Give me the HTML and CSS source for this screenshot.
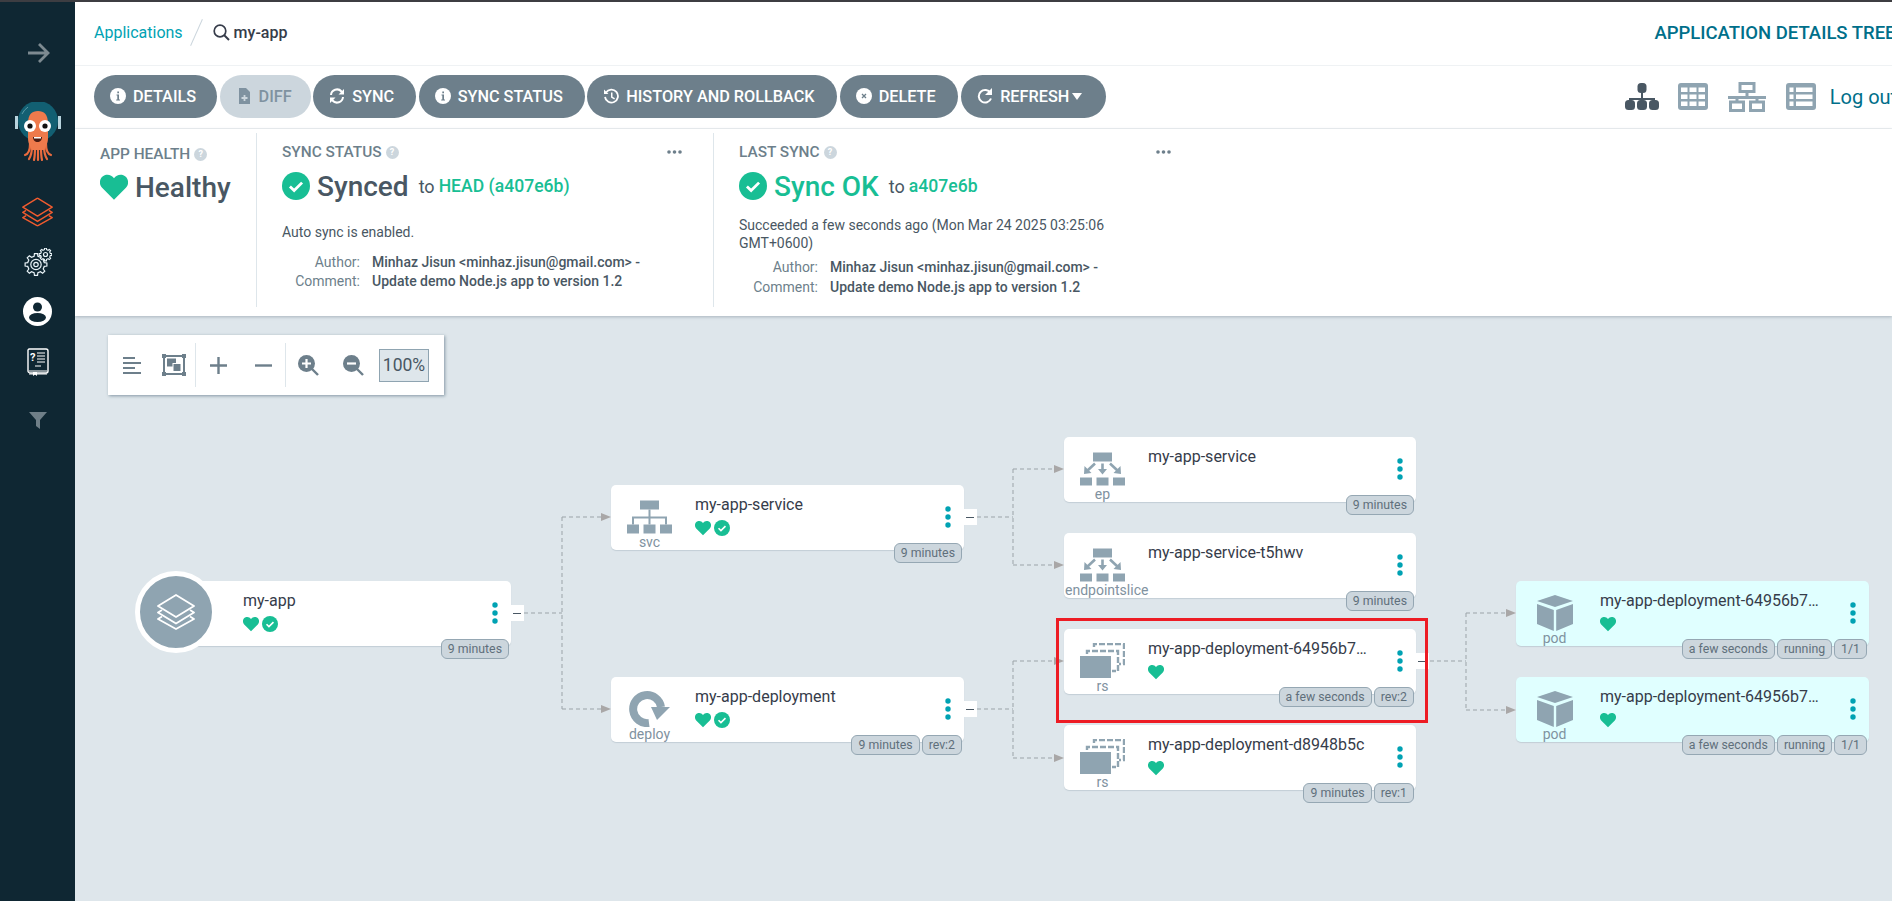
FILE: index.html
```html
<!DOCTYPE html>
<html lang="en">
<head>
<meta charset="utf-8">
<title>my-app - Argo CD</title>
<link rel="stylesheet" href="styles.css">
</head>
<body>
<svg class="defs" xmlns="http://www.w3.org/2000/svg">
  <symbol id="heart" viewBox="0 0 24 22"><path d="M12 22 1.800 11.600C-1.400 8.300-.4 2.500 4 .9c3.100-1.100 6.200 0 8 2.700C13.800.9 16.900-.2 20 .9c4.400 1.600 5.400 7.400 2.200 10.700Z"/></symbol>
  <symbol id="check" viewBox="0 0 24 24"><circle cx="12" cy="12" r="12"/><path d="M6.800 12.400l3.600 3.500 6.800-6.800" fill="none" stroke="#fff" stroke-width="2.400"/></symbol>
  <symbol id="info" viewBox="0 0 16 16"><circle cx="8" cy="8" r="8" fill="#fff"/><path d="M6.500 6.500H9V11.500H10V12.500H6.200V11.500H7.300V7.500H6.500ZM7.300 3.500H9V5.200H7.300Z" fill="#6d7f8b"/></symbol>
  <symbol id="svc" viewBox="0 0 45 33"><path d="M13 0h19v9H13ZM0 24h12v9H0ZM16.500 24h12v9h-12ZM33 24h12v9H33Z"/><path d="M22.500 9v15M6 24v-7h33v7" fill="none" stroke="currentColor" stroke-width="2"/></symbol>
  <symbol id="ep" viewBox="0 0 45 33"><path d="M13 0h19v9H13ZM0 25h12v8H0ZM16.500 25h12v8h-12ZM33 25h12v8H33Z"/><path d="M22.500 11v7M15 11 7 18.500M30 11l8 7.500" fill="none" stroke="currentColor" stroke-width="2.600"/><path d="M18 16.500h9l-4.500 5.500ZM4.500 13.500l-.5 8 7.500-1ZM40.500 13.500l.5 8-7.500-1Z"/></symbol>
  <symbol id="rs" viewBox="0 0 45 36"><rect y="13" width="31" height="22"/><path d="M7 11V8H38V28H32" fill="none" stroke="currentColor" stroke-width="2.400" stroke-dasharray="6 2"/><path d="M14 4V1H44V21H39" fill="none" stroke="currentColor" stroke-width="2.400" stroke-dasharray="6 2"/></symbol>
  <symbol id="deploy" viewBox="0 0 42 36"><path d="M20 32A14 14 0 1 1 32 16" fill="none" stroke="currentColor" stroke-width="8"/><path d="M22 16H41L28 29Z"/></symbol>
  <symbol id="pod" viewBox="0 0 36 36"><path d="M18 0 36 6 18 12 0 6ZM0 9 16.800 15V36L0 29ZM36 9 19.200 15V36L36 29Z"/></symbol>
  <symbol id="stack" viewBox="0 0 38 36"><g fill="none" stroke="currentColor" stroke-width="1.800" stroke-linejoin="round"><path d="M19 1 37 12 19 23 1 12Z"/><path d="M5 16 1 18.500 19 29.500 37 18.500 33 16"/><path d="M5 22.500 1 25 19 35 37 25 33 22.500"/></g></symbol>
  <path id="gear" d="M8.280-1.910 10.890-1.530V1.530L8.280 1.910 7.210 4.500 8.780 6.620 6.620 8.780 4.500 7.210 1.910 8.280 1.530 10.890H-1.530L-1.910 8.280-4.500 7.210-6.620 8.780-8.780 6.620-7.210 4.500-8.280 1.910-10.890 1.530V-1.530L-8.280-1.910-7.210-4.500-8.780-6.620-6.620-8.780-4.500-7.210-1.910-8.280-1.530-10.890H1.530L1.910-8.280 4.500-7.210 6.620-8.780 8.780-6.620 7.210-4.500Z"/>
</svg>
<div class="strip"></div>
<div class="app">
  <nav class="side">
    <svg class="s-arrow" viewBox="0 0 24 24"><path d="M2 12h20M13 3l9 9-9 9" fill="none" stroke="#7d8a91" stroke-width="2.800"/></svg>
    <svg class="s-logo" viewBox="0 0 50 60">
      <circle cx="25" cy="19" r="20" fill="#125f72"/>
      <rect x="2" y="14" width="3" height="13" fill="#b8d3dd"/><rect x="45" y="14" width="3" height="13" fill="#b8d3dd"/>
      <path d="M9 12a18 18 0 0 1 6-7" fill="none" stroke="#5b9aa8" stroke-width="1"/>
      <g fill="none" stroke="#ea6b3e" stroke-width="2.200" stroke-linecap="round"><path d="M17 42c0 6-2 10-5 11M19 44c0 6-1 10-3 13M22 44c0 6 0 10-1 14M25 44v14M28 44c0 6 0 10 1 14M31 44c0 6 1 10 3 13M33 42c0 6 2 10 5 11"/></g>
      <path d="M15 22C15 12 19 9 25 9s10 3 10 13v14c0 6-3 10-4 12H19c-1-2-4-6-4-12Z" fill="#ef7a4c"/>
      <circle cx="17" cy="24" r="6" fill="#fff"/><circle cx="32" cy="24" r="6" fill="#fff"/>
      <circle cx="17" cy="24" r="2.600" fill="#111"/><circle cx="32" cy="24" r="2.600" fill="#111"/>
      <path d="M20 35h9c0 3-2 5-4.500 5S20 38 20 35Z" fill="#4a1b12"/><path d="M21 35h7v1.500h-7Z" fill="#fff"/>
    </svg>
    <svg class="s-stack" viewBox="0 0 38 36"><use href="#stack"/></svg>
    <svg class="s-gear" viewBox="0 0 28 28"><g fill="#0f2733" stroke="#e9f3f8" stroke-width="1.200"><use href="#gear" transform="translate(12 16.500)"/><circle cx="12" cy="16.500" r="5.200"/><circle cx="12" cy="16.500" r="2.200"/><use href="#gear" transform="translate(21.500 6.500) scale(.58)" stroke-width="2"/><circle cx="21.500" cy="6.500" r="2"/></g></svg>
    <svg class="s-user" viewBox="0 0 29 29"><circle cx="14.500" cy="14.500" r="14.500" fill="#fff"/><circle cx="14.500" cy="10" r="4.500" fill="#0f2733"/><ellipse cx="14.500" cy="20.500" rx="8.500" ry="4.500" fill="#0f2733"/></svg>
    <svg class="s-book" viewBox="0 0 22 28"><path d="M2 1h17c1 0 2 1 2 2v20c0 1-1 2-2 2H3c-1 0-2-1-2-2V2Z" fill="#0f2733" stroke="#fff" stroke-width="1.400"/><path d="M2 23h18M2 26h18" stroke="#fff" stroke-width="1.200"/><path d="M6 24h4v4L8 26.500 6 28Z" fill="#fff"/><text x="3" y="13" class="s-book-q">?</text><path d="M10 5h8M10 8h8M10 11h8M10 14h8M8 18h6" stroke="#fff" stroke-width="1.200"/></svg>
    <svg class="s-filter" viewBox="0 0 18 17"><path d="M0 0h18L11 8v9L7 14V8Z" fill="#6f7f88"/></svg>
  </nav>
  <main class="main">
    <header class="top">
      <a class="crumb">Applications</a>
      <span class="slash"></span>
      <svg class="search" viewBox="0 0 17 17"><circle cx="7" cy="7" r="5.800" fill="none" stroke="#363c4a" stroke-width="1.700"/><path d="M11 11l5 5" stroke="#363c4a" stroke-width="1.900"/></svg>
      <span class="crumb-app">my-app</span>
      <span class="page-title">APPLICATION DETAILS TREE</span>
    </header>
    <div class="actions">
      <button class="btn"><svg class="ic"><use href="#info"/></svg>DETAILS</button>
      <button class="btn off"><svg class="ic" viewBox="0 0 16 16"><path d="M3 0h7l4 4v12H3Z" fill="#7f92a0"/><path d="M8.500 7v6M5.500 10h6" stroke="#ccd6dd" stroke-width="1.800"/></svg>DIFF</button>
      <button class="btn b-sync"><svg class="ic" viewBox="0 0 16 16"><g fill="none" stroke="#fff" stroke-width="2"><path d="M2 7a6 6 0 0 1 10.500-3.500L14 5"/><path d="M14 9a6 6 0 0 1-10.500 3.500L2 11"/></g><path d="M15 1v5.500H9.500ZM1 15V9.500h5.500Z" fill="#fff"/></svg>SYNC</button>
      <button class="btn b-status"><svg class="ic"><use href="#info"/></svg>SYNC STATUS</button>
      <button class="btn b-hist"><svg class="ic" viewBox="0 0 16 16"><path d="M3 4.500A6.500 6.500 0 1 1 2 9" fill="none" stroke="#fff" stroke-width="1.800"/><path d="M1 1.500 5.500 6H1ZM8 4.500h1.500v4.300l2.500 1.500-.8 1.200L8 9.500Z" fill="#fff"/></svg>HISTORY AND ROLLBACK</button>
      <button class="btn b-del"><svg class="ic" viewBox="0 0 16 16"><circle cx="8" cy="8" r="8" fill="#fff"/><path d="M6 6l4 4M10 6l-4 4" stroke="#6d7f8b" stroke-width="1.300"/></svg>DELETE</button>
      <button class="btn b-ref"><svg class="ic" viewBox="0 0 16 16"><path d="M13.500 5A6.300 6.300 0 1 0 14 10.500" fill="none" stroke="#fff" stroke-width="2"/><path d="M15 0v7H8Z" fill="#fff"/></svg>REFRESH<i class="caret"></i></button>
      <div class="views">
        <svg class="v-tree" viewBox="0 0 34 27"><path d="M17 8v8M5 21v-5h24v5M17 16v5" fill="none" stroke="#495763" stroke-width="2"/><rect x="12.500" width="9" height="10" rx="3.500" fill="#495763"/><rect y="17" width="10" height="10" rx="3.500" fill="#495763"/><rect x="12" y="17" width="10" height="10" rx="3.500" fill="#495763"/><rect x="24" y="17" width="10" height="10" rx="3.500" fill="#495763"/></svg>
        <svg class="v-grid" viewBox="0 0 30 27"><rect width="30" height="27" rx="3" fill="#8fa4b1"/><path d="M3 4.500h6.500v4.500H3ZM11.500 4.500H18.500v4.500H11.500ZM20.500 4.500H27v4.500H20.500ZM3 11.500h6.500v4.500H3ZM11.500 11.500H18.500v4.500H11.500ZM20.500 11.500H27v4.500H20.500ZM3 18.500h6.500V23H3ZM11.500 18.500H18.500V23H11.500ZM20.500 18.500H27V23H20.500Z" fill="#fff"/></svg>
        <svg class="v-net" viewBox="0 0 38 30"><g fill="none" stroke="#8fa4b1" stroke-width="3"><rect x="12" y="1.500" width="14" height="8"/><rect x="2.500" y="20" width="13" height="8.500"/><rect x="22.500" y="20" width="13" height="8.500"/><path d="M19 9.500v7M0 15.500h38M9 15.500V20M29 15.500V20"/></g></svg>
        <svg class="v-list" viewBox="0 0 30 27"><rect width="30" height="27" rx="3" fill="#8fa4b1"/><path d="M3.500 4.500h4v4.500h-4ZM10 4.500H26.500v4.500H10ZM3.500 11.500h4v4.500h-4ZM10 11.500H26.500v4.500H10ZM3.500 18.500h4V23h-4ZM10 18.500H26.500V23H10Z" fill="#fff"/></svg>
        <span class="logout">Log out</span>
      </div>
    </div>
    <section class="status">
      <div class="panel p-health">
        <div class="p-head"><span class="p-title">APP HEALTH<i class="help">?</i></span></div>
        <div class="p-main"><svg class="big-heart"><use href="#heart"/></svg><span class="big">Healthy</span></div>
      </div>
      <div class="panel p-sync">
        <div class="p-head"><span class="p-title">SYNC STATUS<i class="help">?</i></span><svg class="dots" viewBox="0 0 15 4"><circle cx="2" cy="2" r="1.800"/><circle cx="7.500" cy="2" r="1.800"/><circle cx="13" cy="2" r="1.800"/></svg></div>
        <div class="p-main"><svg class="big-check"><use href="#check"/></svg><span class="big">Synced</span><span class="to">to</span><span class="rev">HEAD (a407e6b)</span></div>
        <p class="note n-auto">Auto sync is enabled.</p>
        <dl class="meta m-sync"><dt>Author:</dt><dd>Minhaz Jisun &lt;minhaz.jisun@gmail.com&gt; -</dd><dt>Comment:</dt><dd>Update demo Node.js app to version 1.2</dd></dl>
      </div>
      <div class="panel p-last">
        <div class="p-head"><span class="p-title">LAST SYNC<i class="help">?</i></span><svg class="dots" viewBox="0 0 15 4"><circle cx="2" cy="2" r="1.800"/><circle cx="7.500" cy="2" r="1.800"/><circle cx="13" cy="2" r="1.800"/></svg></div>
        <div class="p-main"><svg class="big-check"><use href="#check"/></svg><span class="big ok">Sync OK</span><span class="to">to</span><span class="rev">a407e6b</span></div>
        <p class="note n-last">Succeeded a few seconds ago (Mon Mar 24 2025 03:25:06 GMT+0600)</p>
        <dl class="meta m-last"><dt>Author:</dt><dd>Minhaz Jisun &lt;minhaz.jisun@gmail.com&gt; -</dd><dt>Comment:</dt><dd>Update demo Node.js app to version 1.2</dd></dl>
      </div>
    </section>
    <section class="canvas">
      <div class="toolbar">
        <span class="tool t1"><svg viewBox="0 0 18 17"><path d="M0 1h12M0 6h18M0 11h12M0 16h18" stroke="#6d7f8b" stroke-width="2"/></svg></span>
        <span class="tool t2 sep"><svg viewBox="0 0 24 22"><rect x="2" y="2" width="20" height="18" fill="none" stroke="#6d7f8b" stroke-width="2"/><path d="M0 0h4v4H0ZM20 0h4v4h-4ZM0 18h4v4H0ZM20 18h4v4h-4Z" fill="#6d7f8b"/><rect x="5" y="4.500" width="9" height="8" fill="#6d7f8b"/><rect x="11" y="9.500" width="8" height="8" fill="#6d7f8b" stroke="#fff"/></svg></span>
        <span class="tool t3"><svg viewBox="0 0 17 17"><path d="M8.500 0v17M0 8.500h17" stroke="#6d7f8b" stroke-width="2.400"/></svg></span>
        <span class="tool t3 sep"><svg viewBox="0 0 17 17"><path d="M0 8.500h17" stroke="#6d7f8b" stroke-width="2.400"/></svg></span>
        <span class="tool t5"><svg viewBox="0 0 21 21"><circle cx="8.500" cy="8.500" r="8.500" fill="#6d7f8b"/><path d="M14 14l6 6" stroke="#6d7f8b" stroke-width="2.400"/><path d="M8.500 4v9M4 8.500h9" stroke="#fff" stroke-width="2.200"/></svg></span>
        <span class="tool t5"><svg viewBox="0 0 21 21"><circle cx="8.500" cy="8.500" r="8.500" fill="#6d7f8b"/><path d="M14 14l6 6" stroke="#6d7f8b" stroke-width="2.400"/><path d="M4 8.500h9" stroke="#fff" stroke-width="2.200"/></svg></span>
        <span class="zoom">100%</span>
      </div>

      <svg class="edges" xmlns="http://www.w3.org/2000/svg">
        <g class="lines">
          <path d="M449 297H487M487 201H526M487 393H526M487 201V393"/>
          <path d="M902 201H938M938 153H979M938 249H979M938 153V249"/>
          <path d="M902 393H938M938 345H979M938 442H979M938 345V442"/>
          <path d="M1355 345H1391M1391 297H1431M1391 394H1431M1391 297V394"/>
        </g>
        <g class="heads">
          <path d="M526 197l10 4-10 4ZM526 389l10 4-10 4Z"/>
          <path d="M979 149l10 4-10 4ZM979 245l10 4-10 4ZM979 341l10 4-10 4ZM979 438l10 4-10 4Z"/>
          <path d="M1431 293l10 4-10 4ZM1431 390l10 4-10 4Z"/>
        </g>
      </svg>

      <article class="node n-app">
        <div class="app-badge"><svg viewBox="0 0 38 36"><use href="#stack"/></svg></div>
        <div class="kind"></div>
        <div class="body"><div class="name">my-app</div><div class="health"><svg><use href="#heart"/></svg><svg><use href="#check"/></svg></div></div>
        <svg class="kebab" viewBox="0 0 6 22"><circle cx="3" cy="3" r="2.700"/><circle cx="3" cy="11" r="2.700"/><circle cx="3" cy="19" r="2.700"/></svg>
        <span class="expander"></span>
        <div class="tags"><span>9 minutes</span></div>
      </article>

      <article class="node n-svc">
        <div class="kind"><svg class="k-45"><use href="#svc"/></svg><span>svc</span></div>
        <div class="body"><div class="name">my-app-service</div><div class="health"><svg><use href="#heart"/></svg><svg><use href="#check"/></svg></div></div>
        <svg class="kebab" viewBox="0 0 6 22"><circle cx="3" cy="3" r="2.700"/><circle cx="3" cy="11" r="2.700"/><circle cx="3" cy="19" r="2.700"/></svg>
        <span class="expander"></span>
        <div class="tags"><span>9 minutes</span></div>
      </article>

      <article class="node n-deploy">
        <div class="kind"><svg class="k-42"><use href="#deploy"/></svg><span>deploy</span></div>
        <div class="body"><div class="name">my-app-deployment</div><div class="health"><svg><use href="#heart"/></svg><svg><use href="#check"/></svg></div></div>
        <svg class="kebab" viewBox="0 0 6 22"><circle cx="3" cy="3" r="2.700"/><circle cx="3" cy="11" r="2.700"/><circle cx="3" cy="19" r="2.700"/></svg>
        <span class="expander"></span>
        <div class="tags"><span>9 minutes</span><span>rev:2</span></div>
      </article>

      <article class="node n-ep">
        <div class="kind"><svg class="k-45"><use href="#ep"/></svg><span>ep</span></div>
        <div class="body"><div class="name">my-app-service</div></div>
        <svg class="kebab" viewBox="0 0 6 22"><circle cx="3" cy="3" r="2.700"/><circle cx="3" cy="11" r="2.700"/><circle cx="3" cy="19" r="2.700"/></svg>
        <div class="tags"><span>9 minutes</span></div>
      </article>

      <article class="node n-slice">
        <div class="kind"><svg class="k-45"><use href="#ep"/></svg><span>endpointslice</span></div>
        <div class="body"><div class="name">my-app-service-t5hwv</div></div>
        <svg class="kebab" viewBox="0 0 6 22"><circle cx="3" cy="3" r="2.700"/><circle cx="3" cy="11" r="2.700"/><circle cx="3" cy="19" r="2.700"/></svg>
        <div class="tags"><span>9 minutes</span></div>
      </article>

      <article class="node n-rs1">
        <div class="kind"><svg class="k-45"><use href="#rs"/></svg><span>rs</span></div>
        <div class="body"><div class="name">my-app-deployment-64956b7…</div><div class="health"><svg><use href="#heart"/></svg></div></div>
        <svg class="kebab" viewBox="0 0 6 22"><circle cx="3" cy="3" r="2.700"/><circle cx="3" cy="11" r="2.700"/><circle cx="3" cy="19" r="2.700"/></svg>
        <span class="expander"></span>
        <div class="tags"><span>a few seconds</span><span>rev:2</span></div>
      </article>

      <article class="node n-rs2">
        <div class="kind"><svg class="k-45"><use href="#rs"/></svg><span>rs</span></div>
        <div class="body"><div class="name">my-app-deployment-d8948b5c</div><div class="health"><svg><use href="#heart"/></svg></div></div>
        <svg class="kebab" viewBox="0 0 6 22"><circle cx="3" cy="3" r="2.700"/><circle cx="3" cy="11" r="2.700"/><circle cx="3" cy="19" r="2.700"/></svg>
        <div class="tags"><span>9 minutes</span><span>rev:1</span></div>
      </article>

      <article class="node pod n-pod1">
        <div class="kind"><svg class="k-36"><use href="#pod"/></svg><span>pod</span></div>
        <div class="body"><div class="name">my-app-deployment-64956b7…</div><div class="health"><svg><use href="#heart"/></svg></div></div>
        <svg class="kebab" viewBox="0 0 6 22"><circle cx="3" cy="3" r="2.700"/><circle cx="3" cy="11" r="2.700"/><circle cx="3" cy="19" r="2.700"/></svg>
        <div class="tags"><span>a few seconds</span><span>running</span><span>1/1</span></div>
      </article>

      <article class="node pod n-pod2">
        <div class="kind"><svg class="k-36"><use href="#pod"/></svg><span>pod</span></div>
        <div class="body"><div class="name">my-app-deployment-64956b7…</div><div class="health"><svg><use href="#heart"/></svg></div></div>
        <svg class="kebab" viewBox="0 0 6 22"><circle cx="3" cy="3" r="2.700"/><circle cx="3" cy="11" r="2.700"/><circle cx="3" cy="19" r="2.700"/></svg>
        <div class="tags"><span>a few seconds</span><span>running</span><span>1/1</span></div>
      </article>

      <div class="highlight"></div>
    </section>
  </main>
</div>
</body>
</html>
```
FILE: styles.css
```css
* { box-sizing: border-box; }
html, body { margin: 0; height: 100%; overflow: hidden; }
body { font-family: Roboto, "Liberation Sans", sans-serif; color: #495763; background: #fff; }
.defs { position: absolute; width: 0; height: 0; }
.strip { height: 2px; background: #3d3d42; }
.app { display: flex; height: 899px; }

/* sidebar */
.side { width: 75px; flex: none; background: #0f2733; display: flex; flex-direction: column; align-items: center; padding-top: 39px; }
.side svg { flex: none; display: block; }
.s-arrow { width: 24px; height: 24px; }
.s-logo { width: 50px; height: 60px; margin-top: 37px; }
.s-stack { width: 31px; height: 30px; margin-top: 35px; color: #ef5b2f; }
.s-gear { width: 28px; height: 28px; margin-top: 21px; }
.s-user { width: 29px; height: 29px; margin-top: 21px; }
.s-book { width: 22px; height: 28px; margin-top: 22px; }
.s-book-q { font-family: Roboto, sans-serif; font-size: 11px; font-weight: 700; fill: #fff; }
.s-filter { width: 18px; height: 17px; margin-top: 36px; }

/* main */
.main { width: 1817px; flex: none; display: flex; flex-direction: column; overflow: hidden; }
.top { height: 64px; flex: none; border-bottom: 1px solid #eff2f4; display: flex; align-items: center; padding: 0 0 2px 19px; white-space: nowrap; }
.crumb { font-size: 16px; color: #00a2b3; }
.slash { width: 1px; height: 29px; background: #ccd6dd; margin: 0 13px; transform: rotate(24deg); flex: none; }
.search { width: 17px; height: 17px; margin-left: 3px; flex: none; }
.crumb-app { font-size: 16px; color: #363c4a; margin-left: 4px; font-weight: 500; }
.page-title { font-size: 18.500px; font-weight: 500; color: #006f8a; margin-left: 1367px; flex: none; }

.actions { height: 63px; flex: none; border-bottom: 1px solid #eff2f4; display: flex; align-items: center; padding: 0 0 1px 19px; white-space: nowrap; }
.btn { height: 43px; border: 0; border-radius: 22px; background: #6d7f8b; color: #fff; font: 500 16.250px Roboto, sans-serif; display: flex; align-items: center; gap: 7px; padding: 0 21px 1px 16px; margin-right: 2.500px; flex: none; }
.btn.off { background: #ccd6dd; color: #7f92a0; padding-right: 19px; }
.btn.b-sync { padding-right: 22px; }
.btn.b-status { padding-right: 22px; }
.btn.b-hist { padding-right: 22px; margin-right: 3px; }
.btn.b-del { padding-right: 22px; margin-right: 3.500px; }
.btn.b-ref { padding-right: 24px; }
.ic { width: 16px; height: 16px; flex: none; }
.caret { width: 0; height: 0; border: 5.500px solid transparent; border-top: 7px solid #fff; border-bottom: 0; margin-left: -4px; }
.views { display: flex; align-items: center; flex: none; margin-left: 516px; }
.views svg { display: block; flex: none; }
.v-tree { width: 34px; height: 27px; }
.v-grid { width: 30px; height: 27px; margin-left: 19px; }
.v-net { width: 38px; height: 30px; margin-left: 20px; }
.v-list { width: 30px; height: 27px; margin-left: 20px; }
.logout { font-size: 20px; color: #006f8a; margin-left: 14px; }

/* status */
.status { height: 187px; flex: none; display: flex; padding-top: 4px; background: #fff; box-shadow: 0 1px 3px rgba(70, 90, 105, .35); position: relative; z-index: 2; }
.panel { height: 174px; padding: 9px 31px 0 25px; flex: none; }
.p-health { width: 182px; border-right: 1px solid #dee6eb; padding: 11px 0 0 25px; }
.p-sync { width: 457px; border-right: 1px solid #dee6eb; }
.p-last { width: 488px; }
.p-head { display: flex; justify-content: space-between; align-items: center; height: 20px; }
.p-title { font-size: 15.400px; font-weight: 500; color: #6d7f8b; display: flex; align-items: center; }
.help { width: 13px; height: 13px; border-radius: 50%; background: #ccd6dd; color: #fff; font: 700 9px/13px Roboto, sans-serif; text-align: center; margin-left: 4px; }
.dots { width: 15px; height: 4px; fill: #6d7f8b; }
.p-main { display: flex; align-items: center; height: 32px; margin-top: 8px; white-space: nowrap; }
.p-main svg { flex: none; }
.p-health .p-main { margin-top: 7px; }
.big { font-size: 28px; font-weight: 500; color: #495763; margin-left: 7px; }
.big.ok { color: #18be94; }
.big-heart { width: 28px; height: 26px; fill: #18be94; }
.big-check { width: 28px; height: 28px; fill: #18be94; }
.to { font-size: 18px; color: #495763; margin-left: 10px; }
.rev { font-size: 17.600px; font-weight: 500; color: #18be94; margin-left: 4px; }
.note { margin: 0; font-size: 14px; line-height: 17.500px; color: #495763; }
.n-auto { margin-top: 22px; }
.n-last { margin-top: 15px; width: 400px; }
.meta { margin: 0; display: grid; grid-template-columns: 78px 1fr; column-gap: 12px; font-size: 14px; line-height: 19.500px; }
.m-sync { margin-top: 11px; }
.m-last { margin-top: 5px; line-height: 20px; grid-template-columns: 79px 1fr; }
.meta dt { text-align: right; color: #6d7f8b; }
.meta dd { margin: 0; font-weight: 500; color: #495763; white-space: nowrap; }

/* canvas */
.canvas { flex: 1; position: relative; background: #dee6eb; }
.toolbar { position: absolute; left: 33px; top: 19px; width: 336px; height: 60px; background: #fff; box-shadow: 1px 1px 3px rgba(60, 85, 105, .55); display: flex; align-items: center; padding-left: 4px; }
.tool { height: 44px; display: flex; align-items: center; justify-content: center; flex: none; }
.tool svg { display: block; }
.t1 { width: 40px; }
.t1 svg { width: 18px; height: 17px; }
.t2 { width: 44px; }
.t2 svg { width: 24px; height: 22px; }
.t3 { width: 45px; }
.t3 svg { width: 17px; height: 17px; }
.t5 { width: 45px; }
.t5 svg { width: 21px; height: 21px; }
.sep { border-right: 1px solid #dee6eb; }
.zoom { margin-left: 3px; width: 50px; height: 33px; border: 1px solid #8fa4b1; background: #dee6eb; font-size: 17.500px; line-height: 30px; text-align: center; color: #495763; }

.edges { position: absolute; left: 0; top: 0; width: 100%; height: 100%; }
.lines { fill: none; stroke: #9ba3a8; stroke-width: 1; stroke-dasharray: 4 3; }
.heads { fill: #a9a7a7; }

.node { position: absolute; width: 353px; height: 65px; background: #fff; border-radius: 5px; box-shadow: 0 1px 1px #c3ced6; display: flex; }
.pod { background: #e0ffff; }
.n-app { left: 83px; top: 265px; }
.n-svc { left: 536px; top: 169px; }
.n-deploy { left: 536px; top: 361px; }
.n-ep { left: 989px; top: 121px; width: 352px; }
.n-slice { left: 989px; top: 217px; width: 352px; }
.n-rs1 { left: 989px; top: 313px; width: 352px; }
.n-rs2 { left: 989px; top: 409px; width: 352px; }
.n-pod1 { left: 1441px; top: 265px; }
.n-pod2 { left: 1441px; top: 361px; }

.kind { width: 77px; flex: none; padding-top: 14px; color: #8fa4b1; fill: #8fa4b1; }
.n-app .kind { width: 78px; }
.kind svg { display: block; margin: 0 auto; height: 36px; }
.k-45 { width: 45px; }
.k-42 { width: 42px; }
.k-36 { width: 36px; }
.kind span { display: block; text-align: center; font-size: 14px; line-height: 16px; margin-top: -1px; color: #7f92a0; white-space: nowrap; }
.n-slice .kind span { margin-left: 1px; }
.body { padding: 10px 0 0 7px; width: 235px; flex: none; }
.name { font-size: 16px; line-height: 20px; color: #363c4a; white-space: nowrap; }
.health { display: flex; gap: 3px; margin-top: 5px; }
.health svg { width: 16px; height: 16px; fill: #18be94; display: block; }
.kebab { position: absolute; right: 13px; top: 21px; width: 6px; height: 22px; fill: #00a2b3; }
.expander { position: absolute; left: 100%; top: 24px; width: 13px; height: 16px; background: #fff; }
.expander::after { content: ""; position: absolute; left: 2px; top: 8px; width: 8px; height: 1px; background: #495763; }
.tags { position: absolute; right: 2px; top: 58px; display: flex; gap: 2px; }
.tags span { height: 20px; padding: 0 6px; border: 1px solid #95a7b3; border-radius: 6px; background: #ccd6dd; font-size: 12.300px; line-height: 18px; color: #5f6f7b; white-space: nowrap; }
.app-badge { position: absolute; left: -23px; top: -10px; width: 82px; height: 82px; border-radius: 50%; border: 5px solid #fff; background: #8fa4b1; color: #fff; display: flex; align-items: center; justify-content: center; }
.app-badge svg { width: 38px; height: 36px; }
.highlight { position: absolute; left: 981px; top: 302px; width: 372px; height: 105px; border: 3px solid #ed1c24; }
```
